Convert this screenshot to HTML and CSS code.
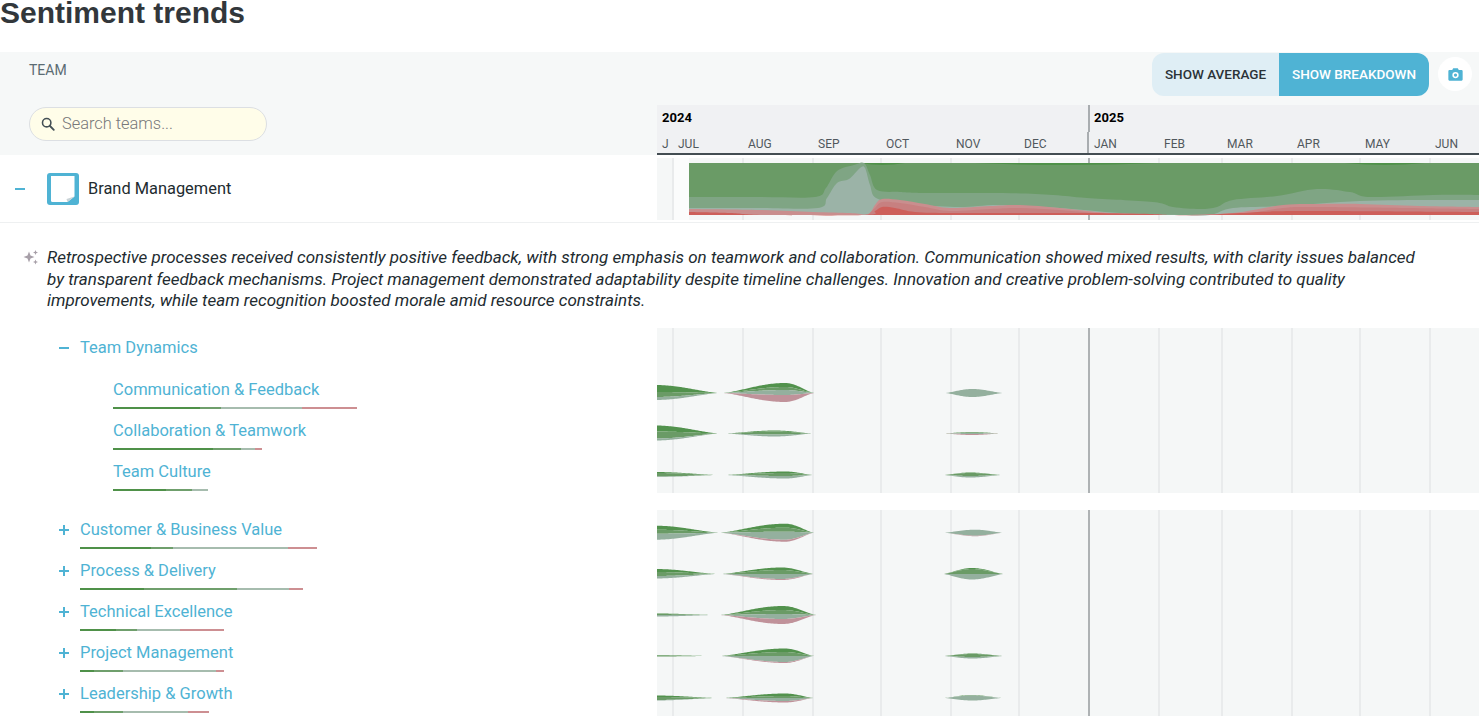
FILE: index.html
```html
<!DOCTYPE html>
<html lang="en">
<head>
  <meta charset="UTF-8">
  <title>Sentiment trends</title>
  <link rel="stylesheet" href="styles.css">
</head>
<body>

  <h1 class="page-title">Sentiment trends</h1>

  <!-- header: team column + timeline -->
  <div class="head">
    <div class="head-left">
      <div class="team-label">TEAM</div>
      <label class="search">
        <svg class="search-icon" viewBox="0 0 16 16" width="14" height="14">
          <circle cx="6.5" cy="6.500" r="4.8" fill="none" stroke="#444f55" stroke-width="1.8"/>
          <path d="M10 10l4.6 4.600" stroke="#444f55" stroke-width="2.100" stroke-linecap="round"/>
        </svg>
        <input type="text" placeholder="Search teams...">
      </label>
    </div>
    <div class="head-right">
      <div class="toolbar">
        <div class="toggle">
          <button class="toggle-btn">SHOW AVERAGE</button>
          <button class="toggle-btn active">SHOW BREAKDOWN</button>
        </div>
        <button class="camera-btn" aria-label="Download image">
          <svg viewBox="0 0 16 14" width="15" height="13">
            <path fill="#4fb3d4" fill-rule="evenodd" d="M1.5 2.2h3l1-2h5l1 2h3a1.2 1.2 0 0 1 1.2 1.2v9a1.2 1.2 0 0 1-1.2 1.2h-13a1.2 1.2 0 0 1-1.2-1.2v-9a1.2 1.2 0 0 1 1.2-1.2zM8 4.2a3.4 3.4 0 1 0 0 6.8 3.4 3.4 0 0 0 0-6.8zM8 5.900a1.7 1.7 0 1 1 0 3.4 1.7 1.7 0 0 1 0-3.4z"/>
          </svg>
        </button>
      </div>
      <div class="timeline">
        <div class="years">
          <span class="year">2024</span>
          <span class="year year-next">2025</span>
        </div>
        <div class="months">
          <span>J</span><span>JUL</span><span>AUG</span><span>SEP</span><span>OCT</span><span>NOV</span><span>DEC</span>
          <span class="month-next">JAN</span><span>FEB</span><span>MAR</span><span>APR</span><span>MAY</span><span>JUN</span>
        </div>
      </div>
    </div>
  </div>

  <!-- team row -->
  <div class="team-row">
    <div class="team-name">
      <span class="toggle-icon minus thin"></span>
      <svg class="team-logo" viewBox="0 0 32 32" width="32" height="32">
        <rect width="32" height="32" rx="3" fill="#4fb3d4"/>
        <path d="M4 3h23.5v20.5l-7 5.500H5.500a1.500 1.500 0 0 1-1.500-1.500z" fill="#fff"/>
        <path d="M20.500 29l7-5.500-8 2.500z" fill="#c9d3d7"/>
      </svg>
      <span class="team-title">Brand Management</span>
    </div>
    <svg class="chart chart-team" id="chartTeam" viewBox="657 158 822 62"></svg>
  </div>

  <!-- AI summary -->
  <div class="summary">
    <svg class="sparkle" viewBox="0 0 16 16" width="16" height="16">
      <path fill="#a79fa8" d="M6 2.500l1.500 4 4 1.500-4 1.500-1.500 4-1.500-4-4-1.500 4-1.500z"/>
      <path fill="#a79fa8" d="M12.500 1l.7 1.800 1.800.7-1.800.7-.7 1.800-.7-1.800-1.800-.7 1.800-.7zM12.500 10.500l.7 1.800 1.800.7-1.800.7-.7 1.800-.7-1.800-1.800-.7 1.800-.7z"/>
    </svg>
    <p class="summary-text">Retrospective processes received consistently positive feedback, with strong emphasis on teamwork and collaboration. Communication showed mixed results, with clarity issues balanced by transparent feedback mechanisms. Project management demonstrated adaptability despite timeline challenges. Innovation and creative problem-solving contributed to quality improvements, while team recognition boosted morale amid resource constraints.</p>
  </div>

  <!-- Team Dynamics -->
  <div class="group">
    <div class="group-list">
      <div class="cat-row cat-open">
        <span class="toggle-icon minus"></span>
        <a class="cat-link">Team Dynamics</a>
      </div>
      <div class="sub-list">
        <div class="sub-row">
          <a class="cat-link">Communication &amp; Feedback</a>
          <div class="bar" style="width:244px"><i class="seg-dark" style="flex:87"></i><i class="seg-mid" style="flex:21"></i><i class="seg-light" style="flex:81"></i><i class="seg-red" style="flex:55"></i></div>
        </div>
        <div class="sub-row">
          <a class="cat-link">Collaboration &amp; Teamwork</a>
          <div class="bar" style="width:149px"><i class="seg-dark" style="flex:100"></i><i class="seg-mid" style="flex:28"></i><i class="seg-light" style="flex:14"></i><i class="seg-red" style="flex:7"></i></div>
        </div>
        <div class="sub-row">
          <a class="cat-link">Team Culture</a>
          <div class="bar" style="width:95px"><i class="seg-dark" style="flex:53"></i><i class="seg-mid" style="flex:26"></i><i class="seg-light" style="flex:16"></i></div>
        </div>
      </div>
    </div>
    <svg class="chart chart-one" id="chartDynamics" viewBox="657 328 822 165"></svg>
  </div>

  <!-- other categories -->
  <div class="group group-rest">
    <div class="group-list">
      <div class="cat-row">
        <span class="toggle-icon plus"></span>
        <div class="cat-body">
          <a class="cat-link">Customer &amp; Business Value</a>
          <div class="bar" style="width:237px"><i class="seg-dark" style="flex:71"></i><i class="seg-mid" style="flex:22"></i><i class="seg-light" style="flex:115"></i><i class="seg-red" style="flex:29"></i></div>
        </div>
      </div>
      <div class="cat-row">
        <span class="toggle-icon plus"></span>
        <div class="cat-body">
          <a class="cat-link">Process &amp; Delivery</a>
          <div class="bar" style="width:223px"><i class="seg-dark" style="flex:64"></i><i class="seg-mid" style="flex:93"></i><i class="seg-light" style="flex:52"></i><i class="seg-red" style="flex:14"></i></div>
        </div>
      </div>
      <div class="cat-row">
        <span class="toggle-icon plus"></span>
        <div class="cat-body">
          <a class="cat-link">Technical Excellence</a>
          <div class="bar" style="width:144px"><i class="seg-dark" style="flex:36"></i><i class="seg-mid" style="flex:21"></i><i class="seg-light" style="flex:43"></i><i class="seg-red" style="flex:44"></i></div>
        </div>
      </div>
      <div class="cat-row">
        <span class="toggle-icon plus"></span>
        <div class="cat-body">
          <a class="cat-link">Project Management</a>
          <div class="bar" style="width:144px"><i class="seg-dark" style="flex:14"></i><i class="seg-mid" style="flex:29"></i><i class="seg-light" style="flex:93"></i><i class="seg-red" style="flex:8"></i></div>
        </div>
      </div>
      <div class="cat-row">
        <span class="toggle-icon plus"></span>
        <div class="cat-body">
          <a class="cat-link">Leadership &amp; Growth</a>
          <div class="bar" style="width:129px"><i class="seg-dark" style="flex:14"></i><i class="seg-mid" style="flex:29"></i><i class="seg-light" style="flex:65"></i><i class="seg-red" style="flex:21"></i></div>
        </div>
      </div>
    </div>
    <svg class="chart chart-two" id="chartRest" viewBox="657 510 822 206"></svg>
  </div>

  <script src="chart.js"></script>
</body>
</html>
```

FILE: styles.css
```css
body {
  margin: 0;
  background: #ffffff;
  font-family: Roboto, "Liberation Sans", sans-serif;
  color: #222b30;
  height: 718px;
  overflow: hidden;
}

.page-title {
  margin: 0 0 26px;
  font-family: "Liberation Sans", Arial, sans-serif;
  font-size: 30px;
  line-height: 26px;
  font-weight: 700;
  color: #32373b;
}

/* header */
.head {
  display: grid;
  grid-template-columns: 657px 1fr;
  height: 103px;
  background: #f6f8f8;
}

.head-left {
  padding: 10px 0 0 29px;
}

.team-label {
  font-size: 14px;
  line-height: 16px;
  color: #5b6b73;
}

.search {
  display: flex;
  align-items: center;
  gap: 7px;
  box-sizing: border-box;
  width: 238px;
  height: 34px;
  margin-top: 29px;
  padding-left: 11px;
  background: #fffde9;
  border: 1px solid #dcdfe3;
  border-radius: 18px;
}

.search input {
  flex: 1;
  min-width: 0;
  margin-bottom: 2px;
  padding: 0;
  border: none;
  outline: none;
  background: transparent;
  font-family: Roboto, sans-serif;
  font-size: 16.4px;
  font-weight: 300;
  color: #333;
}

.search input::placeholder {
  color: #77787a;
  opacity: 1;
}

.head-right {
  display: flex;
  flex-direction: column;
}

.toolbar {
  display: flex;
  justify-content: flex-end;
  align-items: flex-start;
  gap: 9px;
  height: 53px;
  padding: 1px 7px 0 0;
  box-sizing: border-box;
}

.toggle {
  display: flex;
  height: 43px;
  border-radius: 12px;
  overflow: hidden;
}

.toggle-btn {
  border: none;
  padding: 0 0 2px;
  width: 127px;
  background: #dfeef5;
  font-family: Roboto, sans-serif;
  font-size: 13.5px;
  font-weight: 500;
  color: #2b3338;
}

.toggle-btn.active {
  width: 150px;
  background: #4fb3d4;
  color: #ffffff;
}

.camera-btn {
  display: flex;
  align-items: center;
  justify-content: center;
  width: 34px;
  height: 34px;
  margin-top: 4px;
  padding: 0;
  border: none;
  border-radius: 50%;
  background: #ffffff;
}

.timeline {
  height: 50px;
  box-sizing: border-box;
  background: #f0f1f3;
  border-bottom: 2px solid #434d52;
}

.years {
  display: grid;
  grid-template-columns: 431px 1fr;
  height: 27px;
}

.year {
  padding: 5px 0 0 5px;
  font-size: 13px;
  line-height: 15px;
  font-weight: 700;
  color: #000000;
}

.year-next {
  border-left: 2px solid #a9adb0;
  padding-left: 4px;
}

.months {
  display: grid;
  grid-template-columns: 16px 70px 70px 68px 70px 68px 70px 70px 63px 70px 68px 70px 49px;
  height: 21px;
}

.months span {
  padding: 5px 0 0 5px;
  font-size: 12px;
  line-height: 14px;
  color: #50585d;
}

.month-next {
  box-shadow: -2px 0 0 #a9adb0;
}

/* team row */
.team-row {
  display: grid;
  grid-template-columns: 657px 1fr;
  height: 68px;
  box-sizing: border-box;
  padding: 3px 0 2px;
  border-bottom: 1px solid #eef0f1;
}

.team-name {
  display: flex;
  align-items: center;
  padding-left: 15px;
  font-size: 16.4px;
}

.team-logo {
  margin: 0 9px 0 22px;
}

.team-title {
  margin-bottom: 1px;
}

.chart {
  display: block;
  width: 822px;
  background: #f5f7f7;
}

.chart-team {
  height: 62px;
}

.chart-one {
  height: 165px;
}

.chart-two {
  height: 206px;
}

/* summary */
.summary {
  display: flex;
  height: 105px;
  box-sizing: border-box;
  padding: 24px 0 0 23px;
}

.sparkle {
  flex: none;
  margin-top: 2px;
}

.summary-text {
  width: 1376px;
  margin: 0 0 0 8px;
  font-size: 17px;
  line-height: 21.5px;
  font-style: italic;
  color: #222b30;
}

/* category list */
.group {
  display: grid;
  grid-template-columns: 657px 1fr;
}

.group-rest {
  margin-top: 17px;
}

.group-list {
  padding: 8px 0 0 59px;
  display: flex;
  flex-direction: column;
  gap: 8px;
}

.cat-row {
  display: flex;
  gap: 11px;
}

.cat-open {
  margin-bottom: 11px;
}

.toggle-icon {
  position: relative;
  flex: none;
  width: 10px;
  height: 23px;
}

.toggle-icon::before {
  content: "";
  position: absolute;
  left: 0;
  top: 10.5px;
  width: 10px;
  height: 2.5px;
  background: #4fb3d4;
}

.toggle-icon.thin::before {
  height: 2px;
}

.plus::after {
  content: "";
  position: absolute;
  left: 3.750px;
  top: 7px;
  width: 2.500px;
  height: 10px;
  background: #4fb3d4;
}

.cat-link {
  display: block;
  font-size: 16.500px;
  line-height: 23px;
  color: #4fb3d4;
}

.sub-list {
  display: flex;
  flex-direction: column;
  gap: 8px;
  padding-left: 54px;
}

.sub-row, .cat-body {
  height: 33px;
}

.bar {
  display: flex;
  height: 2px;
  margin-top: 6px;
}

.bar i {
  display: block;
}

.seg-dark { background: #4f9149; }
.seg-mid { background: #6f9f6c; }
.seg-light { background: #a6bcae; }
.seg-red { background: #cd8f92; }
```

FILE: chart.js
```js
// month lines, x in page pixels
const gridLines = [673, 743, 813, 881, 951, 1019, 1159, 1222, 1292, 1360, 1430];
const yearLine = 1089;

// stack colours for the small blobs, top to bottom
const bandColors = ['#52924d', '#6a9b66', '#94b09e', '#c0929a'];

function el(name, attrs, parent) {
  const node = document.createElementNS('http://www.w3.org/2000/svg', name);
  for (const key in attrs) node.setAttribute(key, attrs[key]);
  parent.appendChild(node);
  return node;
}

function drawGrid(svg, top, bottom) {
  gridLines.forEach(x => el('line', { x1: x, x2: x, y1: top, y2: bottom, stroke: '#e4e7e9', 'stroke-width': 1.5 }, svg));
  el('line', { x1: yearLine, x2: yearLine, y1: top, y2: bottom, stroke: '#aeb2b4', 'stroke-width': 2 }, svg);
}

// catmull-rom through points
function smooth(points) {
  let d = 'M' + points[0].join(' ');
  for (let i = 0; i < points.length - 1; i++) {
    const p0 = points[i - 1] || points[i];
    const p1 = points[i];
    const p2 = points[i + 1];
    const p3 = points[i + 2] || p2;
    const c1 = [p1[0] + (p2[0] - p0[0]) / 6, p1[1] + (p2[1] - p0[1]) / 6];
    const c2 = [p2[0] - (p3[0] - p1[0]) / 6, p2[1] - (p3[1] - p1[1]) / 6];
    d += 'C' + c1.join(' ') + ' ' + c2.join(' ') + ' ' + p2.join(' ');
  }
  return d;
}

function area(svg, points, color, bottom) {
  const last = points[points.length - 1][0];
  const d = smooth(points) + 'L' + last + ' ' + bottom + 'L' + points[0][0] + ' ' + bottom + 'Z';
  el('path', { d: d, fill: color }, svg);
}

// big team chart
function drawTeamChart(svg) {
  const bottom = 215;
  el('rect', { x: 674, y: 158, width: 15, height: 62, fill: '#fbfcfc' }, svg);
  drawGrid(svg, 158, 220);
  el('rect', { x: 689, y: 163, width: 790, height: 52, fill: '#6a9b66' }, svg);

  // thin dark slivers along the top
  [[860, 905], [975, 1160], [1345, 1425]].forEach(s => {
    const mid = (s[0] + s[1]) / 2;
    el('path', { d: 'M' + s[0] + ' 163Q' + mid + ' 167 ' + s[1] + ' 163Z', fill: '#4f9149' }, svg);
  });

  area(svg, [[689, 197], [760, 197], [815, 197], [826, 188], [837, 171], [854, 165], [864, 163], [870, 175], [877, 190],
    [900, 192], [927, 193], [1003, 193], [1053, 195], [1087, 198], [1153, 202], [1173, 207], [1200, 209], [1217, 207],
    [1233, 200], [1277, 196], [1317, 189], [1350, 192], [1370, 197], [1433, 195], [1479, 195]], '#7fa584', bottom);

  area(svg, [[689, 208], [760, 208], [818, 208], [827, 198], [837, 183], [849, 179], [860, 168], [865, 168], [870, 185],
    [876, 198], [900, 203], [920, 205], [960, 207], [1000, 205], [1060, 208], [1120, 213], [1180, 215], [1210, 215],
    [1233, 208], [1283, 206], [1360, 201], [1433, 200], [1479, 200]], '#9bb3a7', bottom);

  area(svg, [[689, 209], [760, 210], [813, 212], [850, 213], [868, 214], [875, 205], [882, 199], [900, 200], [925, 204],
    [950, 208], [990, 206], [1020, 205], [1060, 208], [1110, 213], [1170, 215], [1233, 213], [1283, 205], [1320, 204],
    [1360, 204], [1420, 206], [1479, 207]], '#c98e8e', bottom);

  area(svg, [[868, 215], [875, 208], [882, 202], [900, 203], [925, 207], [950, 211], [990, 209], [1020, 208], [1060, 210],
    [1110, 214], [1170, 215], [1240, 214], [1283, 208], [1320, 207], [1479, 209]], '#c78080', bottom);

  area(svg, [[689, 212], [730, 213], [765, 215], [865, 215], [875, 211], [882, 207], [895, 208], [915, 212], [950, 213],
    [1000, 213], [1090, 213], [1150, 214], [1170, 215], [1205, 215], [1240, 213], [1300, 211], [1479, 212]], '#cd5f5a', bottom);
}

// bump height 0..1 at x: round on top, thin tips
function bump(x, b) {
  let t = x < b.peak ? (x - b.from) / (b.peak - b.from) : (b.to - x) / (b.to - b.peak);
  t = Math.max(0, Math.min(1, t));
  return Math.pow(Math.sin(t * Math.PI / 2), 1.4);
}

function drawBlob(svg, cy, b) {
  for (let band = 0; band < 4; band++) {
    if (b.off[band] === b.off[band + 1]) continue;
    const upper = [];
    const lower = [];
    for (let x = b.from; x <= b.to; x++) {
      const h = bump(x, b);
      upper.push(x + ' ' + (cy + b.off[band] * h).toFixed(2));
      lower.unshift(x + ' ' + (cy + b.off[band + 1] * h).toFixed(2));
    }
    el('path', { d: 'M' + upper.join('L') + 'L' + lower.join('L') + 'Z', fill: bandColors[band] }, svg);
  }
}

function drawRows(svg, top, bottom, rows) {
  drawGrid(svg, top, bottom);
  rows.forEach(row => row.blobs.forEach(b => {
    drawBlob(svg, row.y, { from: b[0], peak: b[1], to: b[2], off: b[3] });
  }));
}

drawTeamChart(document.getElementById('chartTeam'));

drawRows(document.getElementById('chartDynamics'), 328, 493, [
  { y: 393, blobs: [
    [630, 655, 719, [-8, -1, 4, 7, 7]],
    [723, 785, 814, [-10, -6, -3, 2, 9]],
    [945, 972, 1003, [-4, -4, -4, 4, 4]]
  ] },
  { y: 433.5, blobs: [
    [630, 655, 719, [-8, -2, 5, 7, 7]],
    [725, 775, 813, [-3, -2, 1, 3, 3]],
    [943, 972, 1001, [-1.5, -1, -0.5, 0.5, 1.5]]
  ] },
  { y: 475, blobs: [
    [630, 655, 717, [-3, -2, 1.5, 2, 2]],
    [725, 785, 813, [-3.5, -2, 1, 3.5, 3.5]],
    [943, 970, 1002, [-2.5, -2, 1, 2.5, 2.5]]
  ] }
]);

drawRows(document.getElementById('chartRest'), 510, 716, [
  { y: 532.7, blobs: [
    [630, 655, 719, [-7, -3, 1, 7, 7]],
    [720, 785, 814, [-9, -5, -1, 7, 9]],
    [944, 975, 1003, [-3, -3, -3, 3, 3.5]]
  ] },
  { y: 574, blobs: [
    [630, 655, 717, [-5, -2, 2, 4.5, 4.5]],
    [721, 782, 814, [-6.5, -4, 0, 5, 6]],
    [943, 972, 1004, [-6, -5, 0, 5.5, 5.5]]
  ] },
  { y: 615, blobs: [
    [630, 655, 714, [-1.5, -1, 0, 1.5, 1.5]],
    [720, 783, 816, [-9, -5, -1, 4, 9]]
  ] },
  { y: 656, blobs: [
    [630, 655, 709, [-1, -0.5, 0.5, 0.5, 0.5]],
    [720, 785, 814, [-7.5, -4, 0, 6, 7]],
    [943, 972, 1004, [-2.5, -2, 1, 2.5, 2.5]]
  ] },
  { y: 698, blobs: [
    [630, 655, 716, [-2.5, -1, 2, 2.5, 2.5]],
    [723, 785, 814, [-4.5, -2, 0, 3, 4.5]],
    [944, 972, 1002, [-3, -2.5, -2.5, 2.5, 2.5]]
  ] }
]);
```
